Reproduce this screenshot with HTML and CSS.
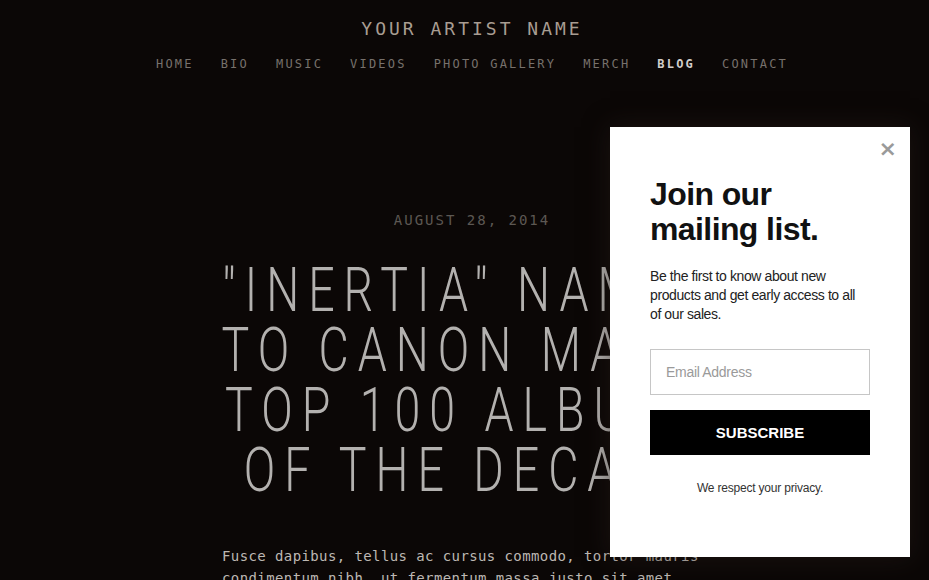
FILE: index.html
```html
<!DOCTYPE html>
<html lang="en">

<head>
    <meta charset="UTF-8">
    <meta name="viewport" content="width=device-width, initial-scale=1.0">
    <title>Your Artist Name - Blog</title>
    <link rel="stylesheet" href="styles.css">
</head>

<body>
    <header class="site-header">
        <h1 class="site-title">YOUR ARTIST NAME</h1>
        <nav class="site-nav">
            <a href="#">HOME</a>
            <a href="#">BIO</a>
            <a href="#">MUSIC</a>
            <a href="#">VIDEOS</a>
            <a href="#">PHOTO GALLERY</a>
            <a href="#">MERCH</a>
            <a href="#" class="active">BLOG</a>
            <a href="#">CONTACT</a>
        </nav>
    </header>

    <main class="post">
        <p class="post-date">AUGUST 28, 2014</p>
        <h2 class="post-title">"INERTIA" NAMED<br>TO CANON MAG'S<br>TOP 100 ALBUMS<br>OF THE DECADE</h2>
        <p class="post-body">Fusce dapibus, tellus ac cursus commodo, tortor mauris condimentum nibh, ut fermentum massa justo sit amet risus. Cras mattis consectetur purus sit amet fermentum.</p>
    </main>

    <!-- popup newsletter -->
    <div class="popup">
        <button class="popup-close" aria-label="Close">&times;</button>
        <h3 class="popup-title">Join our mailing list.</h3>
        <p class="popup-text">Be the first to know about new products and get early access to all of our sales.</p>
        <form class="popup-form">
            <input type="email" placeholder="Email Address">
            <button type="button" class="subscribe">SUBSCRIBE</button>
        </form>
        <p class="popup-note">We respect your privacy.</p>
    </div>
</body>

</html>
```

FILE: styles.css
```css
:root {
    --background-color: #0b0706;
    --title-color: #a89d92;
    --nav-color: #77716c;
    --heading-color: #b3b1af;
    --mono: "DejaVu Sans Mono", "Liberation Mono", monospace;
}

body {
    margin: 0;
    padding: 0 0 0 15px;
    background-color: var(--background-color);
    font-family: var(--mono);
    overflow: hidden;
    height: 580px;
}

.site-header {
    padding-top: 18px;
    text-align: center;
}

.site-title {
    margin: 0;
    font-size: 18px;
    line-height: 22px;
    font-weight: normal;
    letter-spacing: 3px;
    color: var(--title-color);
}

.site-nav {
    margin-top: 16px;
    display: flex;
    justify-content: center;
    gap: 27px;
    line-height: 16px;
}

.site-nav a {
    font-size: 12px;
    letter-spacing: 2.2px;
    color: var(--nav-color);
    text-decoration: none;
}

.site-nav a.active {
    color: #d2cecb;
    font-weight: bold;
}

.post {
    width: 500px;
    margin: 138px auto 0;
    text-align: center;
}

.post-date {
    margin: 0;
    font-size: 14px;
    line-height: 20px;
    letter-spacing: 2px;
    color: #5d5853;
}

/* condensed look: light face squeezed horizontally */
.post-title {
    width: 700px;
    margin: 30px 0 0 -100px;
    font-family: Roboto, sans-serif;
    font-weight: 300;
    font-size: 62px;
    line-height: 60px;
    letter-spacing: 12px;
    color: var(--heading-color);
    transform: scaleX(0.75);
    transform-origin: center;
}

.post-body {
    margin: 45px 0 0;
    text-align: left;
    font-size: 14px;
    line-height: 22px;
    letter-spacing: 0.4px;
    color: #bdb8b3;
}

.popup {
    position: absolute;
    left: 610px;
    top: 127px;
    width: 300px;
    height: 430px;
    box-sizing: border-box;
    padding: 50px 40px 0;
    background-color: #ffffff;
    box-shadow: 0 0 24px rgba(40, 30, 25, 0.55);
    font-family: "Liberation Sans", Arial, sans-serif;
}

.popup-close {
    position: absolute;
    top: 10px;
    right: 13px;
    border: none;
    background: none;
    padding: 0;
    font-family: "DejaVu Sans", sans-serif;
    font-size: 22px;
    line-height: 24px;
    font-weight: bold;
    color: #9a9a9a;
    cursor: pointer;
}

.popup-title {
    margin: 0;
    font-size: 32px;
    line-height: 35px;
    font-weight: bold;
    letter-spacing: -0.6px;
    color: #111111;
}

.popup-text {
    width: 218px;
    margin: 20px 0 0;
    font-size: 14px;
    line-height: 19px;
    letter-spacing: -0.4px;
    color: #222222;
}

.popup-form {
    margin-top: 25px;
    display: flex;
    flex-direction: column;
    gap: 15px;
}

.popup-form input {
    height: 46px;
    box-sizing: border-box;
    border: 1px solid #c6c6c6;
    padding: 0 15px;
    font-family: inherit;
    font-size: 14px;
    letter-spacing: -0.3px;
    outline: none;
}

.popup-form input::placeholder {
    color: #9a9a9a;
}

.subscribe {
    height: 45px;
    border: none;
    background-color: #000000;
    color: #ffffff;
    font-family: inherit;
    font-weight: bold;
    font-size: 15px;
    cursor: pointer;
}

.popup-note {
    margin: 26px 0 0;
    text-align: center;
    font-size: 12px;
    letter-spacing: -0.2px;
    color: #333333;
}
```
